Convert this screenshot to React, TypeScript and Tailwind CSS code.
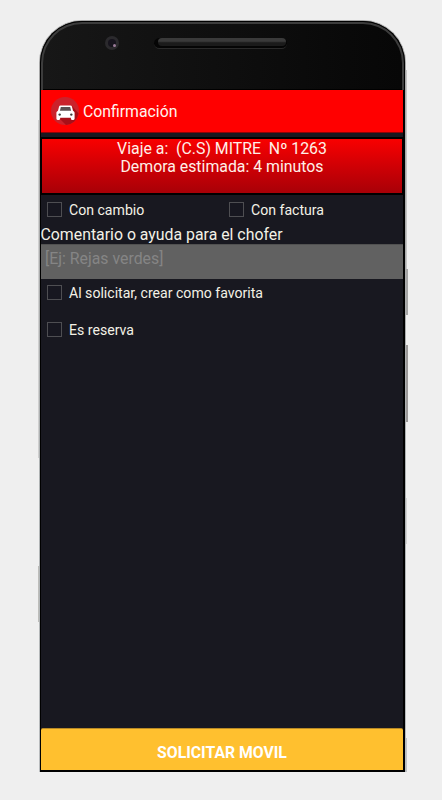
import { useState } from "react";

type CheckOptionProps = {
  label: string;
  className?: string;
};

// Square checkbox with its label
function CheckOption({ label, className = "" }: CheckOptionProps) {
  const [checked, setChecked] = useState(false);

  return (
    <label className={`flex items-center gap-[7px] pl-[7px] h-[15px] ${className}`}>
      <input
        type="checkbox"
        checked={checked}
        onChange={(e) => setChecked(e.target.checked)}
        className="appearance-none w-[15px] h-[15px] shrink-0 border border-[#4e4e52] bg-[#171720] checked:bg-[#ffc02f]"
      />
      <span className="pt-px text-[14.1px] leading-[15px] text-[#f3f1e6] whitespace-nowrap">
        {label}
      </span>
    </label>
  );
}

// Round car logo of the title bar
function CarLogo() {
  return (
    <svg width="28" height="28" viewBox="0 0 28 28" className="shrink-0">
      <circle cx="14" cy="14" r="14" fill="#cb222b" />
      <path d="M21 9 27.6 16.6A14 14 0 0 1 15 28L9 22Z" fill="#a80f18" />
      <path
        d="M9.6 8.4h9.8c.8 0 1.3.4 1.5 1.1l1.1 4.2c1 .5 1.6 1.2 1.6 2.3v5.6c0 .8-.5 1.3-1.2 1.3h-1.3c-.8 0-1.2-.5-1.2-1.3v-.9H9.1v.9c0 .8-.4 1.3-1.2 1.3H6.6c-.7 0-1.2-.5-1.2-1.3V16c0-1.1.6-1.8 1.6-2.3l1.1-4.2c.2-.7.7-1.1 1.5-1.1Z"
        fill="#ffffff"
      />
      <path d="M9.8 10h9.4l.9 3.7H8.9Z" fill="#5b5052" />
      <circle cx="8.7" cy="17.6" r="1.2" fill="#3d3d3d" />
      <circle cx="20.3" cy="17.6" r="1.2" fill="#3d3d3d" />
    </svg>
  );
}

// Upper bezel: camera and speaker
function Bezel() {
  return (
    <div className="h-[69px] rounded-t-[42px] border-[1.5px] border-b-0 border-black bg-[#3c3c3c] pt-[2px] px-[2px]">
      <div className="h-full rounded-t-[39px] border-b border-black bg-gradient-to-r from-[#171717] to-[#070707] flex items-start pt-[12px] pl-[62px]">
        <div className="w-[14px] h-[14px] rounded-full bg-[#2b2a2d] flex items-center justify-center">
          <div className="w-2 h-2 rounded-full bg-[#17141d] flex items-end justify-end">
            <div className="w-[3px] h-[3px] rounded-full bg-[#9b7c99]" />
          </div>
        </div>
        <div className="ml-[35px] mt-[2px] w-[133px] h-[11px] rounded-full bg-[#050505] border-b border-[#2a2a2a] pl-[4px] pr-px">
          <div className="h-[8px] rounded-full bg-gradient-to-b from-[#3a3a3a] from-40% to-[#1b1b1b] to-60%" />
        </div>
      </div>
    </div>
  );
}

export default function App() {
  const [comment, setComment] = useState("");

  return (
    <div className="w-[442px] h-[800px] overflow-hidden bg-[#efefef] pl-[39px] pt-5 font-['Roboto',sans-serif]">
      <div className="relative w-[367px] h-[752px] rounded-t-[43px] bg-gradient-to-b from-[#a8a8a8] from-20% via-[#aeb2b3] via-60% to-[#b9bcbe] pt-px px-px">
        {/* Side keys */}
        <div className="absolute -left-px top-[100px] w-px h-[338px] bg-[#cfcfcf]" />
        <div className="absolute -left-px top-[546px] w-px h-[56px] bg-[#bdbdba]" />
        <div className="absolute -right-px top-[50px] w-px h-[199px] bg-[#c4c4c4]" />
        <div className="absolute -right-[2px] top-[249px] w-[2px] h-[46px] bg-[#a5a5a5]" />
        <div className="absolute -right-[2px] top-[325px] w-[2px] h-[77px] bg-[#9b9999]" />
        <div className="absolute -right-px top-[478px] w-px h-[46px] bg-[#d3d3d3]" />
        <div className="absolute -right-px top-[718px] w-px h-[34px] bg-[#bfc2c6]" />

        <div className="h-[751px] w-[365px] rounded-t-[42px] bg-black flex flex-col">
          <Bezel />

          <div className="w-[362px] ml-px mb-[2px] flex-1 flex flex-col bg-[#181820]">
            {/* Title bar */}
            <header className="h-[43px] bg-[#ff0000] border-b border-[#8b0508] flex items-center pl-[10px] gap-1">
              <CarLogo />
              <h1 className="pt-[2px] text-[15.8px] leading-5 text-[#fff3ee]">Confirmación</h1>
            </header>

            {/* Trip summary */}
            <div className="mt-[4px] h-[58px] border-y-2 border-x border-black bg-gradient-to-b from-[#f90000] to-[#a80007] bg-clip-padding pt-px text-center text-[15.85px] leading-[18px] text-[#fff0e8] whitespace-pre">
              <p>{"Viaje a:  (C.S) MITRE  Nº 1263"}</p>
              <p>Demora estimada: 4 minutos</p>
            </div>

            <div className="mt-[7px] grid grid-cols-[182px_180px] -ml-px">
              <CheckOption label="Con cambio" />
              <CheckOption label="Con factura" />
            </div>

            <p className="mt-[8px] -ml-px pl-[0.5px] text-[15.85px] leading-5 text-[#f3f1e6]">
              Comentario o ayuda para el chofer
            </p>
            <textarea
              value={comment}
              onChange={(e) => setComment(e.target.value)}
              placeholder="[Ej: Rejas verdes]"
              className="-mt-px h-[35px] w-full resize-none bg-[#616161] border-t border-[#515151] pl-[4px] pt-[4px] text-[15.85px] leading-5 text-white placeholder:text-[#858585] outline-none"
            />

            <CheckOption label="Al solicitar, crear como favorita" className="mt-[6px] -ml-px" />
            <CheckOption label="Es reserva" className="mt-[22px] -ml-px" />

            <button className="mt-auto h-[42px] w-full rounded-t-[2px] bg-[#ffc02f] border-t border-[#b98a25] pt-[6px] text-[15.75px] leading-5 font-bold text-white">
              SOLICITAR MOVIL
            </button>
          </div>
        </div>
      </div>
    </div>
  );
}
